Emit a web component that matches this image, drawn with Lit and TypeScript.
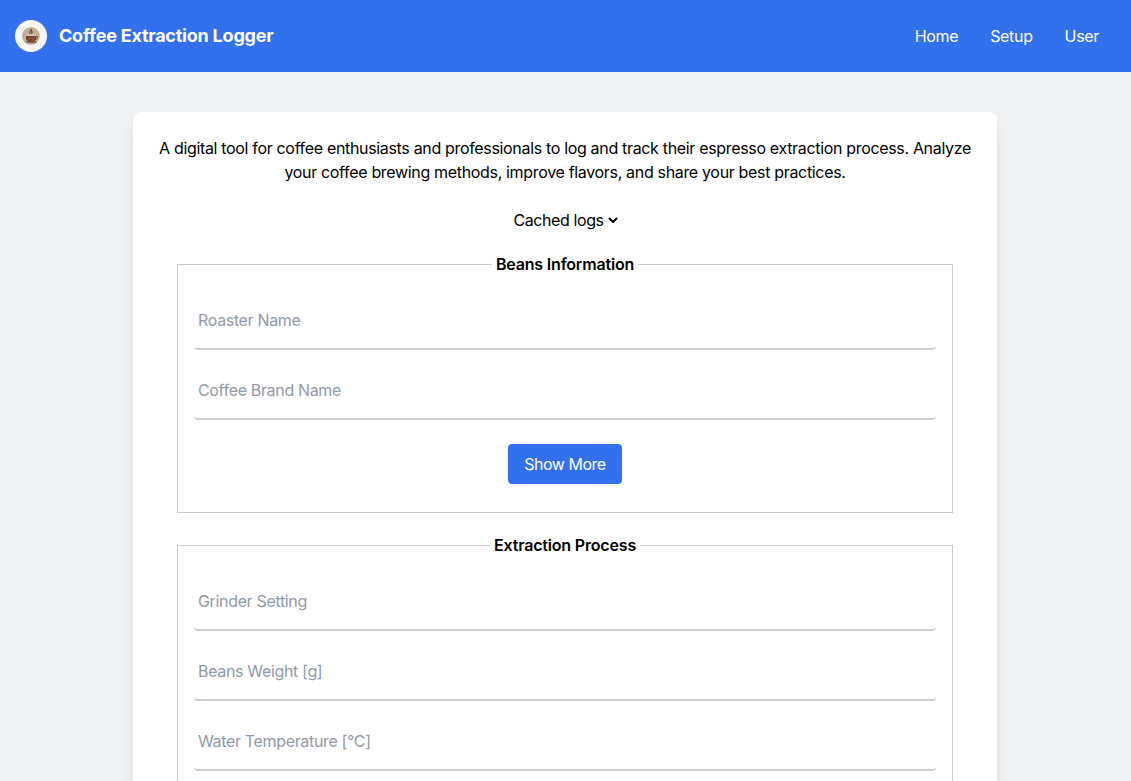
import { LitElement, html, css, svg } from "lit";
import { customElement, property } from "lit/decorators.js";

@customElement("coffee-logo")
class CoffeeLogo extends LitElement {
  static styles = css`
    :host { display: block; width: 32px; height: 32px; }
    .logo { display: block; }
  `;
  render() {
    return html`<svg class="logo" width="32" height="32" viewBox="0 0 32 32">
      ${svg`
      <circle cx="16" cy="16" r="16" fill="#f9f5f2"/>
      <circle cx="15.9" cy="16" r="8.9" fill="#c5ae98"/>
      <ellipse cx="16" cy="22" rx="5.8" ry="1.3" fill="#8e7660"/>
      <path d="M11 15.6h10v2.2c0 3-1.8 4.4-5 4.4s-5-1.4-5-4.4z" fill="#74432b"/>
      <path d="M20.8 16.4h1c1.6 0 1.2 2.8-1.6 3" fill="none" stroke="#4b3d33" stroke-width="1"/>
      <path d="M11 15.3h10" stroke="#e9dccd" stroke-width="1"/>
      <path d="M12.8 20.4c1-1.8 2-2.2 3.4-2.4M17 20.8c.4-1.4 1-2 2.4-2.4" fill="none" stroke="#b8704a" stroke-width=".9"/>
      <path d="M15 13.6c-1.6-1.6 1.6-2.3.7-4.6 2 1.8-.3 2.8.6 4.3 1.4-.5 1.4-1.5.8-2.2" fill="none" stroke="#4c4038" stroke-width=".9"/>`}
    </svg>`;
  }
}

@customElement("site-header")
class SiteHeader extends LitElement {
  static styles = css`
    :host { display: block; }
    .bar { display: flex; align-items: center; justify-content: space-between; height: 72px; box-sizing: border-box; padding: 0 32px 0 15px; background: #3370ed; color: #fff; }
    .brand { display: flex; align-items: center; gap: 12px; }
    .title { font-size: 18px; line-height: 28px; font-weight: 700; letter-spacing: -0.22px; }
    .nav { display: flex; gap: 32px; }
    .link { color: inherit; text-decoration: none; line-height: 24px; letter-spacing: -0.33px; }
  `;
  render() {
    return html`<header class="bar">
      <div class="brand"><coffee-logo></coffee-logo><span class="title">Coffee Extraction Logger</span></div>
      <nav class="nav">${["Home", "Setup", "User"].map((l) => html`<a class="link" href="#">${l}</a>`)}</nav>
    </header>`;
  }
}

@customElement("log-section")
class LogSection extends LitElement {
  @property() heading = "";
  @property({ attribute: false }) fields: string[] = [];
  @property({ type: Boolean }) more = false;
  static styles = css`
    :host { display: block; }
    .group { margin: 0; min-width: 0; border: 1px solid #c9cad2; padding: 16px 16px 28px; }
    .legend { margin: 0 auto; padding: 0 4px; line-height: 24px; font-weight: 600; letter-spacing: -0.18px; }
    .fields { display: flex; flex-direction: column; gap: 12px; }
    .input { display: block; width: 100%; height: 58px; box-sizing: border-box; margin: 0; padding: 16px 4px; border: 0 solid #c9ced4; border-bottom-width: 2px; border-radius: 4px; background: #fff; font: inherit; letter-spacing: -0.34px; outline: none; }
    .input::placeholder { color: #9299a8; opacity: 1; }
    .actions { display: flex; justify-content: center; margin-top: 24px; }
    .button { width: 114px; height: 40px; border: 0; border-radius: 4px; padding: 0; background: #3370ed; color: #fff; font: inherit; letter-spacing: -0.48px; white-space: nowrap; }
  `;
  render() {
    return html`<fieldset class="group">
      <legend class="legend">${this.heading}</legend>
      <div class="fields">${this.fields.map((f) => html`<input class="input" placeholder=${f} />`)}</div>
      ${this.more ? html`<div class="actions"><button class="button">Show More</button></div>` : ""}
    </fieldset>`;
  }
}

@customElement("app-root")
class AppRoot extends LitElement {
  static styles = css`
    :host { display: block; height: 781px; overflow: hidden; background: #eff1f3; color: #000; font: 400 16px/24px Inter, "Liberation Sans", sans-serif; }
    .card { width: 864px; box-sizing: border-box; margin: 40px 0 0 133px; padding: 24px 24px 40px; border-radius: 8px; background: #fff; box-shadow: 0 10px 15px -3px rgba(0,0,0,.1), 0 4px 6px -4px rgba(0,0,0,.1); }
    .intro { margin: 0; text-align: center; letter-spacing: -0.33px; }
    .line { display: block; white-space: nowrap; }
    .picker { display: flex; justify-content: center; margin-top: 24px; }
    .select { display: flex; align-items: center; gap: 4px; padding: 0 0 0 1px; border: 0; background: none; color: inherit; font: inherit; letter-spacing: -0.4px; }
    .sections { display: flex; flex-direction: column; gap: 20px; padding: 20px 20px 0; }
  `;
  render() {
    return html`<site-header></site-header>
      <main class="card">
        <p class="intro"><span class="line">A digital tool for coffee enthusiasts and professionals to log and track their espresso extraction process. Analyze</span><span class="line">your coffee brewing methods, improve flavors, and share your best practices.</span></p>
        <div class="picker"><button class="select">Cached logs<svg width="10" height="6" viewBox="0 0 10 6"><path d="M1 1l4 4 4-4" fill="none" stroke="#000" stroke-width="2"/></svg></button></div>
        <div class="sections">
          <log-section heading="Beans Information" .fields=${["Roaster Name", "Coffee Brand Name"]} more></log-section>
          <log-section heading="Extraction Process" .fields=${["Grinder Setting", "Beans Weight [g]", "Water Temperature [°C]"]}></log-section>
        </div>
      </main>`;
  }
}
